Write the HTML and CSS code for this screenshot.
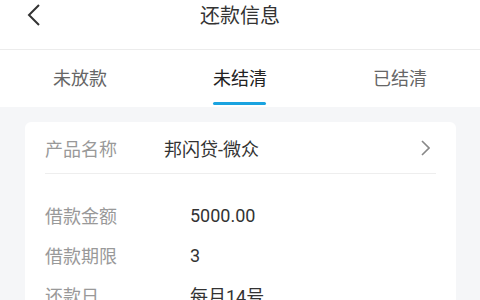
FILE: index.html
```html
<!DOCTYPE html>
<html lang="zh-CN">
<head>
  <meta charset="UTF-8">
  <meta name="viewport" content="width=device-width, initial-scale=1.0">
  <title>还款信息</title>
  <link rel="stylesheet" href="styles.css">
</head>
<body>

<div class="header">
  <svg class="back" width="16" height="24" viewBox="0 0 16 24">
    <polyline points="13,2 3,12 13,22" fill="none" stroke="#333" stroke-width="2"/>
  </svg>
  <div class="title">还款信息</div>
</div>

<div class="tabs">
  <div class="tab">未放款</div>
  <div class="tab active">未结清</div>
  <div class="tab">已结清</div>
</div>

<div class="content">
  <div class="card">
    <div class="product">
      <span class="label">产品名称</span>
      <span class="product-name">邦闪贷-微众</span>
      <svg class="arrow" width="10" height="16" viewBox="0 0 10 16">
        <polyline points="2,1 9,8 2,15" fill="none" stroke="#888" stroke-width="1.6"/>
      </svg>
    </div>
    <div class="rows">
      <div class="row"><span class="label">借款金额</span><span class="value">5000.00</span></div>
      <div class="row"><span class="label">借款期限</span><span class="value">3</span></div>
      <div class="row"><span class="label">还款日</span><span class="value">每月14号</span></div>
    </div>
  </div>
</div>

</body>
</html>
```

FILE: styles.css
```css
body {
  margin: 0;
  font-family: Roboto, "Noto Sans CJK SC", sans-serif;
  background: #f5f6f8;
  color: #333;
}

.header {
  height: 49px;
  background: white;
  border-bottom: 1px solid #ececec;
  display: flex;
  align-items: center;
  justify-content: center;
  position: relative;
}

.back {
  position: absolute;
  left: 26px;
  top: 3px;
}

.title {
  font-size: 20px;
  margin-top: -20px;
}

.tabs {
  display: grid;
  grid-template-columns: repeat(3, 1fr);
  height: 57px;
  background: white;
}

.tab {
  text-align: center;
  font-size: 18px;
  color: #666;
  padding-top: 14px;
  position: relative;
}

.tab.active {
  color: #222;
}

.tab.active::after {
  content: "";
  position: absolute;
  left: 50%;
  margin-left: -27px;
  top: 52px;
  width: 53px;
  height: 3px;
  border-radius: 2px;
  background: #1aa3e0;
}

.content {
  padding: 15px 24px 0 25px;
}

.card {
  background: white;
  border-radius: 6px;
  padding: 0 20px;
}

.product {
  display: flex;
  align-items: center;
  height: 51px;
  border-bottom: 1px solid #eeeeee;
}

.product .label {
  width: 119px;
}

.product-name {
  flex: 1;
  font-size: 18px;
  color: #333;
}

.arrow {
  margin-right: 6px;
}

.label {
  color: #999;
  font-size: 18px;
}

.rows {
  padding-top: 21px;
}

.row {
  display: flex;
  align-items: center;
  height: 40px;
}

.row .label {
  width: 145px;
}

.value {
  font-size: 18px;
  color: #333;
}
```
